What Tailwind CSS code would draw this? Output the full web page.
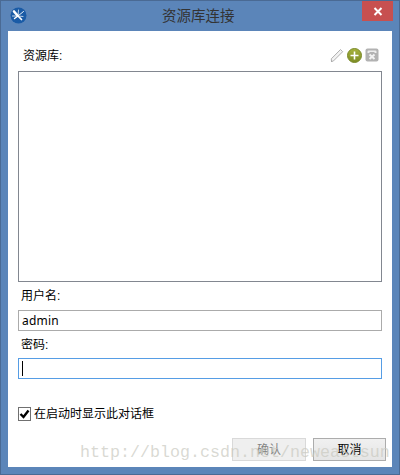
<!DOCTYPE html>
<html lang="zh-CN">
<head>
    <meta charset="UTF-8">
    <title>资源库连接</title>
    <script src="https://cdn.jsdelivr.net/npm/@tailwindcss/browser@4"></script>
</head>
<body class="w-[400px] h-[475px] overflow-hidden bg-white">
    <div class="relative w-[400px] h-[475px] flex flex-col bg-[#5b85b9] border border-[#4a6a94] font-['Liberation_Sans','Noto_Sans_CJK_SC',sans-serif] text-[12px] text-black">

        <!-- title bar -->
        <div class="relative h-[30px] shrink-0 flex items-start">
            <svg class="ml-[9px] mt-[6px]" width="17" height="17" viewBox="0 0 17 17">
                <circle cx="8.5" cy="8.5" r="8" fill="#1a5ba6"/>
                <g stroke="#ffffff" fill="none" stroke-linecap="round">
                    <path d="M4 4.5l3.5 4" stroke-width="2.6"/>
                    <path d="M8 9l5.5-4.5" stroke-width="0.9"/>
                    <path d="M8 9l-3.5 2.5" stroke-width="1.4"/>
                    <path d="M8 9l3.5 3.5" stroke-width="1.7"/>
                    <path d="M8 9h-5.5" stroke-width="0.8"/>
                    <path d="M8 9l.5-6" stroke-width="0.7"/>
                    <path d="M8 9l5 .5" stroke-width="0.7"/>
                </g>
            </svg>
            <div class="absolute left-[161px] top-[6px] text-[14.5px] leading-[18px] text-[#333]">资源库连接</div>
            <div class="ml-auto mr-[6px] w-[31px] h-[20px] bg-[#c75050] flex items-center justify-center">
                <svg width="10" height="9" viewBox="0 0 10 9"><path d="M1.5 1l7 7M8.5 1l-7 7" stroke="#fff" stroke-width="2"/></svg>
            </div>
        </div>

        <!-- client area -->
        <div class="ml-[7px] mr-[7px] h-[436px] bg-white flex flex-col px-[10px]">
            <div class="flex items-center h-[40px] pt-[8px] pl-[5px] pr-[3px]">
                <span class="leading-[16px] mt-[2px]">资源库:</span>
                <div class="ml-auto flex items-center gap-[3px]">
                    <svg width="14" height="15" viewBox="0 0 14 15">
                        <path d="M1.5 13.5l-.2-2.7L10.5 1.5l2.2 2.2-9.2 9.2z" fill="#f2f2f2" stroke="#b0b0b0"/>
                        <path d="M1.3 13.7l1-.3-.7-.8z" fill="#888"/>
                    </svg>
                    <svg width="15" height="15" viewBox="0 0 15 15">
                        <defs>
                            <linearGradient id="addFill" x1="0" y1="0" x2="0" y2="1">
                                <stop offset="0" stop-color="#a7b23d"/>
                                <stop offset="1" stop-color="#7d8c25"/>
                            </linearGradient>
                        </defs>
                        <circle cx="7.5" cy="7.5" r="7" fill="url(#addFill)" stroke="#7a8a2a"/>
                        <path d="M7.5 3.5v8M3.5 7.5h8" stroke="#fff" stroke-width="1.6"/>
                    </svg>
                    <svg width="14" height="14" viewBox="0 0 14 14">
                        <rect x="0.5" y="0.5" width="13" height="13" rx="2" fill="#b2b2b2"/>
                        <path d="M2.5 5V3.5q0-1 1-1h7q1 0 1 1V5H9.5V4h-5v1z" fill="#ececec"/>
                        <path d="M4.5 6.5l5 4.5M9.5 6.5l-5 4.5" stroke="#f2f2f2" stroke-width="2"/>
                    </svg>
                </div>
            </div>

            <div class="h-[211px] border border-[#828790] bg-white"></div>

            <div class="h-[28px] pl-[3px] flex items-center"><span>用户名:</span></div>
            <div class="h-[21px] border border-[#ababab] pl-[3px] flex items-center font-['Noto_Sans','Noto_Sans_CJK_SC',sans-serif] text-[12px] tracking-[0.2px]">admin</div>

            <div class="h-[27px] pl-[3px] flex items-center"><span>密码:</span></div>
            <div class="h-[21px] border border-[#569de5] pl-[3px] flex items-center">
                <div class="w-[1px] h-[15px] bg-black"></div>
            </div>

            <label class="mt-[28px] flex items-center gap-[3px] h-[14px]">
                <span class="w-[13px] h-[14px] border border-[#707070] flex items-center justify-center">
                    <svg width="11" height="10" viewBox="0 0 11 10"><path d="M1.5 5l3 3L9.5 1.5" fill="none" stroke="#000" stroke-width="2.4"/></svg>
                </span>
                <span>在启动时显示此对话框</span>
            </label>

            <div class="mt-[17px] flex justify-end gap-[7px] -mr-[4px]">
                <div class="w-[74px] h-[23px] border border-[#d9d9d9] bg-[#efefef] text-[#838383] flex items-center justify-center">确认</div>
                <div class="w-[73px] h-[23px] border border-[#acacac] bg-gradient-to-b from-[#f0f0f0] to-[#e5e5e5] flex items-center justify-center">取消</div>
            </div>
        </div>

        <!-- watermark -->
        <div class="absolute left-[79px] top-[442px] font-['Liberation_Mono',monospace] text-[16.67px] leading-[20px] text-[#c9c9c0]/70 whitespace-nowrap">http://blog.csdn.net/neweastsun</div>
    </div>
</body>
</html>
